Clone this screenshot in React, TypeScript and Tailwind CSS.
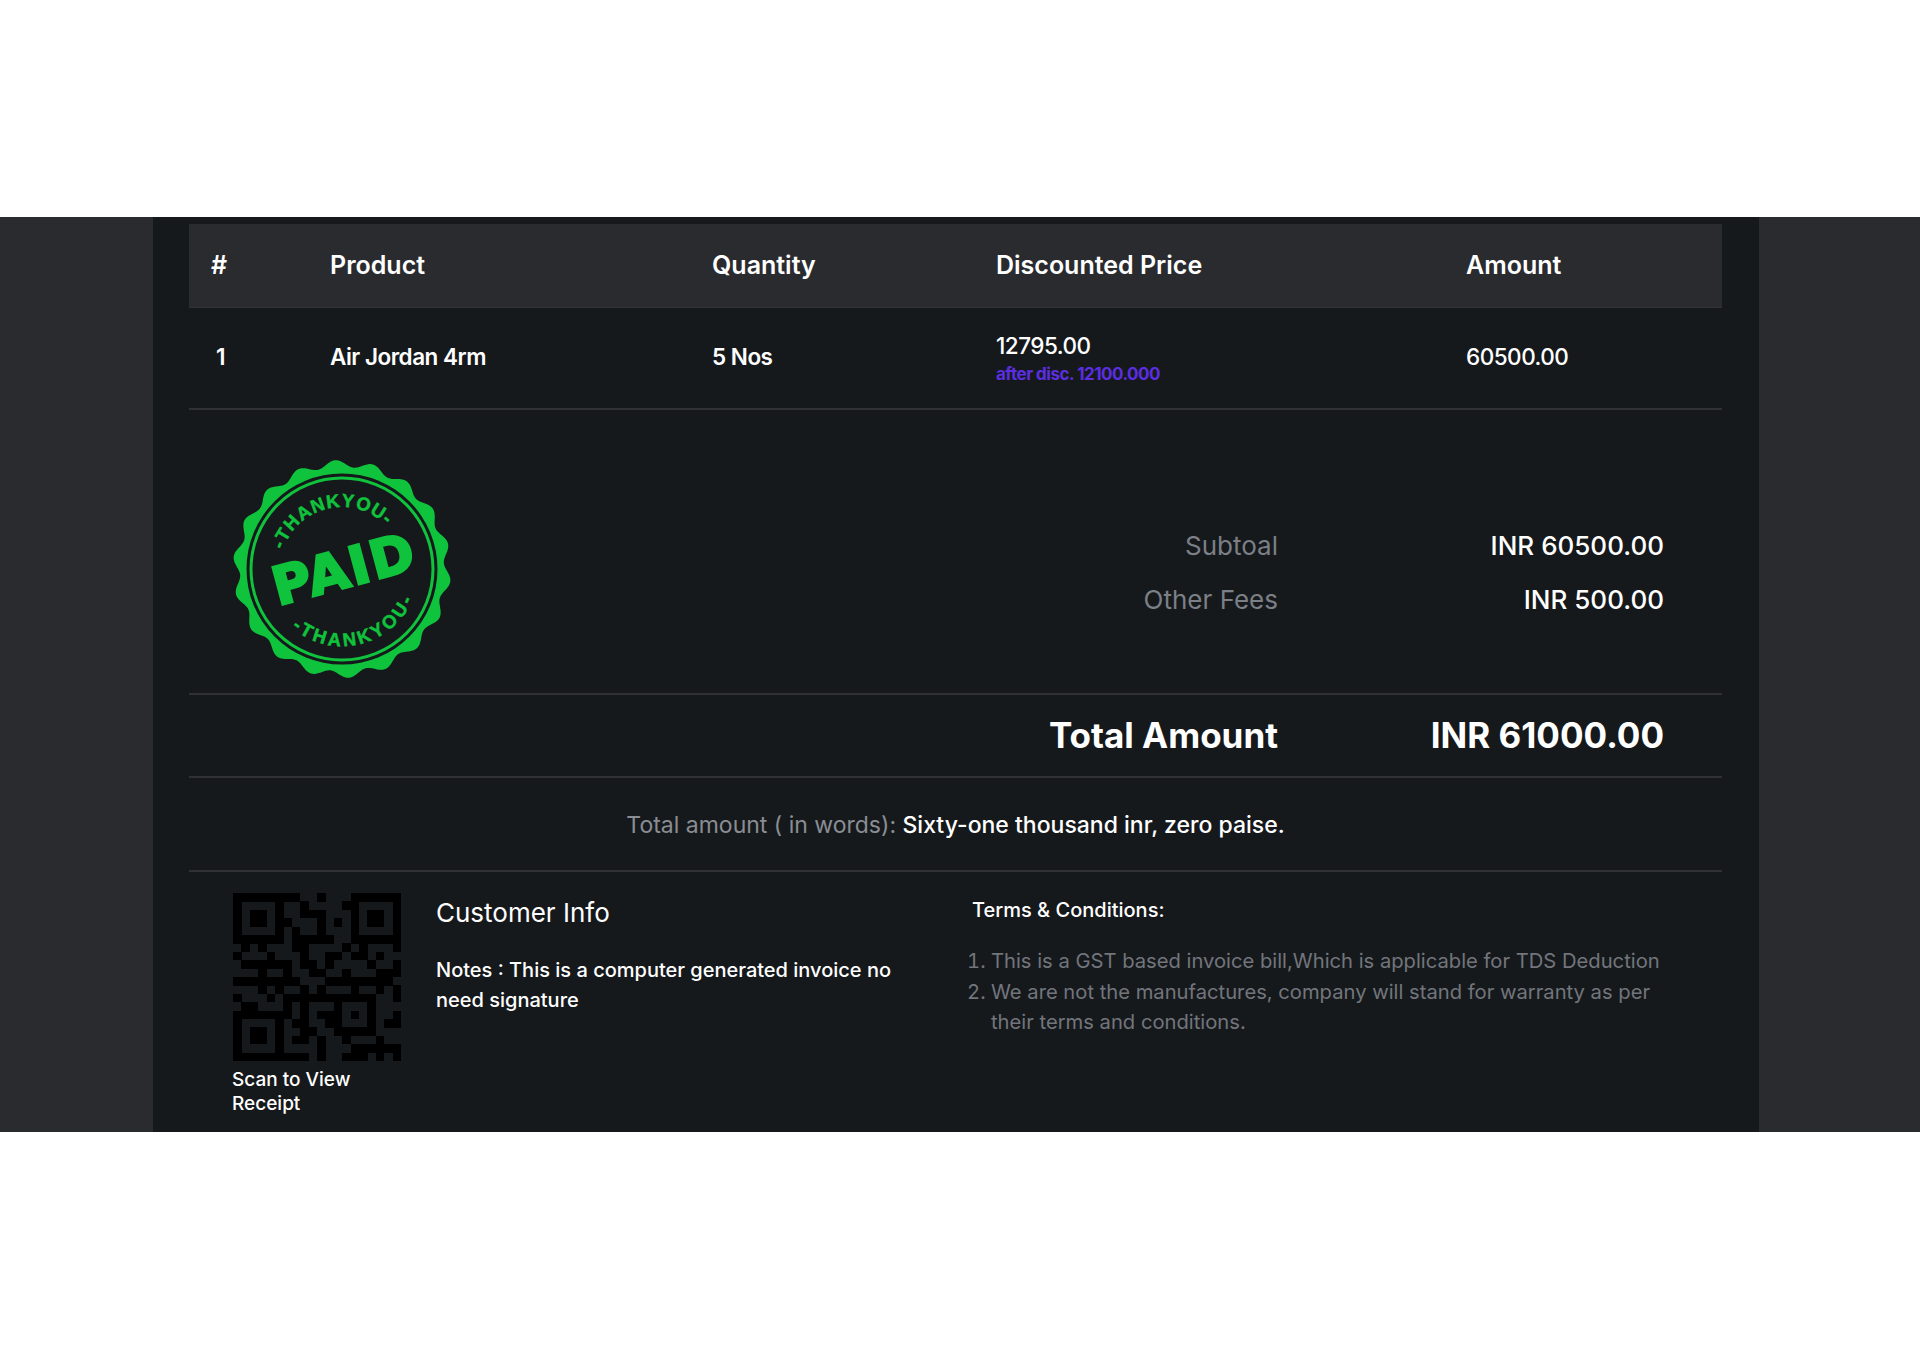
const QR = [
  "11111111001000111111",
  "10000100100001100001",
  "10110100111000101101",
  "10110110001010101101",
  "10000101001000100001",
  "11111101111100111111",
  "01010001100001010001",
  "10001000100110110100",
  "01111110110100001001",
  "00010010011001000111",
  "11111111000111111110",
  "00010100101000100101",
  "10001011111111111001",
  "01100010100010001000",
  "11111110101110101001",
  "10000101100110001011",
  "10110100110011111000",
  "10110101101001000100",
  "10000100001000111111",
  "11111111101001110101",
];

function QrCode() {
  return (
    <svg width="168" height="168" viewBox="0 0 20 20" shapeRendering="crispEdges" className="block">
      {QR.map((row, y) =>
        row.split("").map((c, x) => (c === "1" ? <rect key={`${x}-${y}`} x={x} y={y} width="1.02" height="1.02" fill="#000" /> : null))
      )}
    </svg>
  );
}

function scallop(cx: number, cy: number) {
  const pts: string[] = [];
  for (let i = 0; i < 720; i++) {
    const a = (i / 720) * Math.PI * 2;
    const r = 105.5 + 3.5 * Math.cos(18 * (a + (93.5 * Math.PI) / 180));
    pts.push(`${(cx + r * Math.cos(a)).toFixed(2)},${(cy + r * Math.sin(a)).toFixed(2)}`);
  }
  return pts.join(" ");
}

function arc(r: number, from: number, to: number, sweep: number) {
  const p = (d: number) => {
    const a = (d * Math.PI) / 180;
    return `${(120 + r * Math.cos(a)).toFixed(2)} ${(120 + r * Math.sin(a)).toFixed(2)}`;
  };
  return `M ${p(from)} A ${r} ${r} 0 0 ${sweep} ${p(to)}`;
}

function Stamp() {
  const green = "#10c33c";
  const font = "'Liberation Sans', sans-serif";
  return (
    <svg width="240" height="240" viewBox="0 0 240 240" className="block">
      <polygon points={scallop(120, 120)} fill={green} />
      <circle cx="120" cy="120" r="95.5" fill="#16191c" />
      <circle cx="120" cy="120" r="91" fill="none" stroke={green} strokeWidth="3" />
      <defs>
        <path id="stamp-top" d={arc(62, -190, -16, 1)} />
        <path id="stamp-bottom" d={arc(77, 165, -13, 0)} />
      </defs>
      <text fill={green} stroke={green} strokeWidth="0.5" fontFamily={font} fontWeight="700" fontSize="18.5" letterSpacing="1">
        <textPath href="#stamp-top" startOffset="50%" textAnchor="middle">-THANKYOU-</textPath>
      </text>
      <text fill={green} stroke={green} strokeWidth="0.5" fontFamily={font} fontWeight="700" fontSize="18.5" letterSpacing="3">
        <textPath href="#stamp-bottom" startOffset="50%" textAnchor="middle">-THANKYOU-</textPath>
      </text>
      <text
        x="122"
        y="139"
        transform="rotate(-15 120 120)"
        textAnchor="middle"
        fill={green}
        stroke={green}
        strokeWidth="2.5"
        fontFamily="'DejaVu Sans', sans-serif"
        fontWeight="700"
        fontSize="53"
        letterSpacing="2"
      >
        PAID
      </text>
    </svg>
  );
}

export default function App() {
  return (
    <div className="min-h-[1350px] bg-white font-['Inter',sans-serif] text-white">
      <div className="h-[217px]" />
      <div className="flex h-[915px] overflow-hidden bg-[#2a2b2f]">
        <div className="ml-[153px] w-[1606px] bg-[#16191c] pt-[7px] pr-[37px] pl-[36px]">
          <div className="flex h-[84px] items-center border-b border-[#2f3135] bg-[#2a2b2f] text-[25px] font-semibold">
            <div className="w-[119px] pl-[22px]">#</div>
            <div className="w-[382px] pl-[22px]">Product</div>
            <div className="w-[284px] pl-[22px]">Quantity</div>
            <div className="w-[470px] pl-[22px]">Discounted Price</div>
            <div className="pl-[22px]">Amount</div>
          </div>
          <div className="flex h-[102px] items-center border-b-2 border-[#2f3135] pb-[2px] text-[22.5px] font-semibold tracking-[-0.5px]">
            <div className="w-[119px] pl-[27px]">1</div>
            <div className="w-[382px] pl-[22px]">Air Jordan 4rm</div>
            <div className="w-[284px] pl-[22px]">5 Nos</div>
            <div className="w-[470px] pt-[6px] pl-[22px] font-medium">
              <div className="leading-[28px]">12795.00</div>
              <div className="text-[17px] leading-[28px] font-bold text-[#5b2ee0]">after disc. 12100.000</div>
            </div>
            <div className="pl-[22px] font-medium">60500.00</div>
          </div>

          <div className="flex h-[285px] border-b-2 border-[#2f3135]">
            <div className="pt-[39px] pl-[33px]">
              <Stamp />
            </div>
            <div className="flex flex-1 flex-col pt-[108px] pr-[58px] text-[26px]">
              <div className="flex h-[54px] items-center justify-end">
                <div className="text-[#7b7f86]">Subtoal</div>
                <div className="w-[386px] text-right font-medium">INR 60500.00</div>
              </div>
              <div className="flex h-[54px] items-center justify-end">
                <div className="text-[#7b7f86]">Other Fees</div>
                <div className="w-[386px] text-right font-medium">INR 500.00</div>
              </div>
            </div>
          </div>

          <div className="flex h-[83px] items-center justify-end border-b-2 border-[#2f3135] pr-[58px] text-[35px] font-bold">
            <div>Total Amount</div>
            <div className="w-[386px] text-right">INR 61000.00</div>
          </div>

          <div className="flex h-[94px] items-center justify-center border-b-2 border-[#2f3135] pt-[2px] text-[23px]">
            <span className="text-[#8a8d93]">Total amount ( in words):&nbsp;</span>
            <span className="font-medium">Sixty-one thousand inr, zero paise.</span>
          </div>

          <div className="flex pt-[21px]">
            <div className="ml-[44px] w-[168px]">
              <QrCode />
              <div className="-ml-px pt-[7px] text-[19px] leading-[23.5px] font-medium">
                Scan to View
                <br />
                Receipt
              </div>
            </div>
            <div className="ml-[35px] w-[490px]">
              <div className="pt-[2px] text-[26px] leading-[36px]">Customer Info</div>
              <div className="mt-[24px] text-[20px] leading-[30px] font-medium">
                Notes : This is a computer generated invoice no need signature
              </div>
            </div>
            <div className="ml-[46px] w-[700px]">
              <div className="pt-[2px] text-[20px] leading-[30px] font-medium">Terms &amp; Conditions:</div>
              <ol className="mt-[21px] -ml-[4px] flex list-outside list-decimal flex-col pl-[23px] text-[20.2px] leading-[30.5px] text-[#72757c]">
                <li>This is a GST based invoice bill,Which is applicable for TDS Deduction</li>
                <li>
                  We are not the manufactures, company will stand for warranty as per
                  <br />
                  their terms and conditions.
                </li>
              </ol>
            </div>
          </div>
        </div>
      </div>
    </div>
  );
}
